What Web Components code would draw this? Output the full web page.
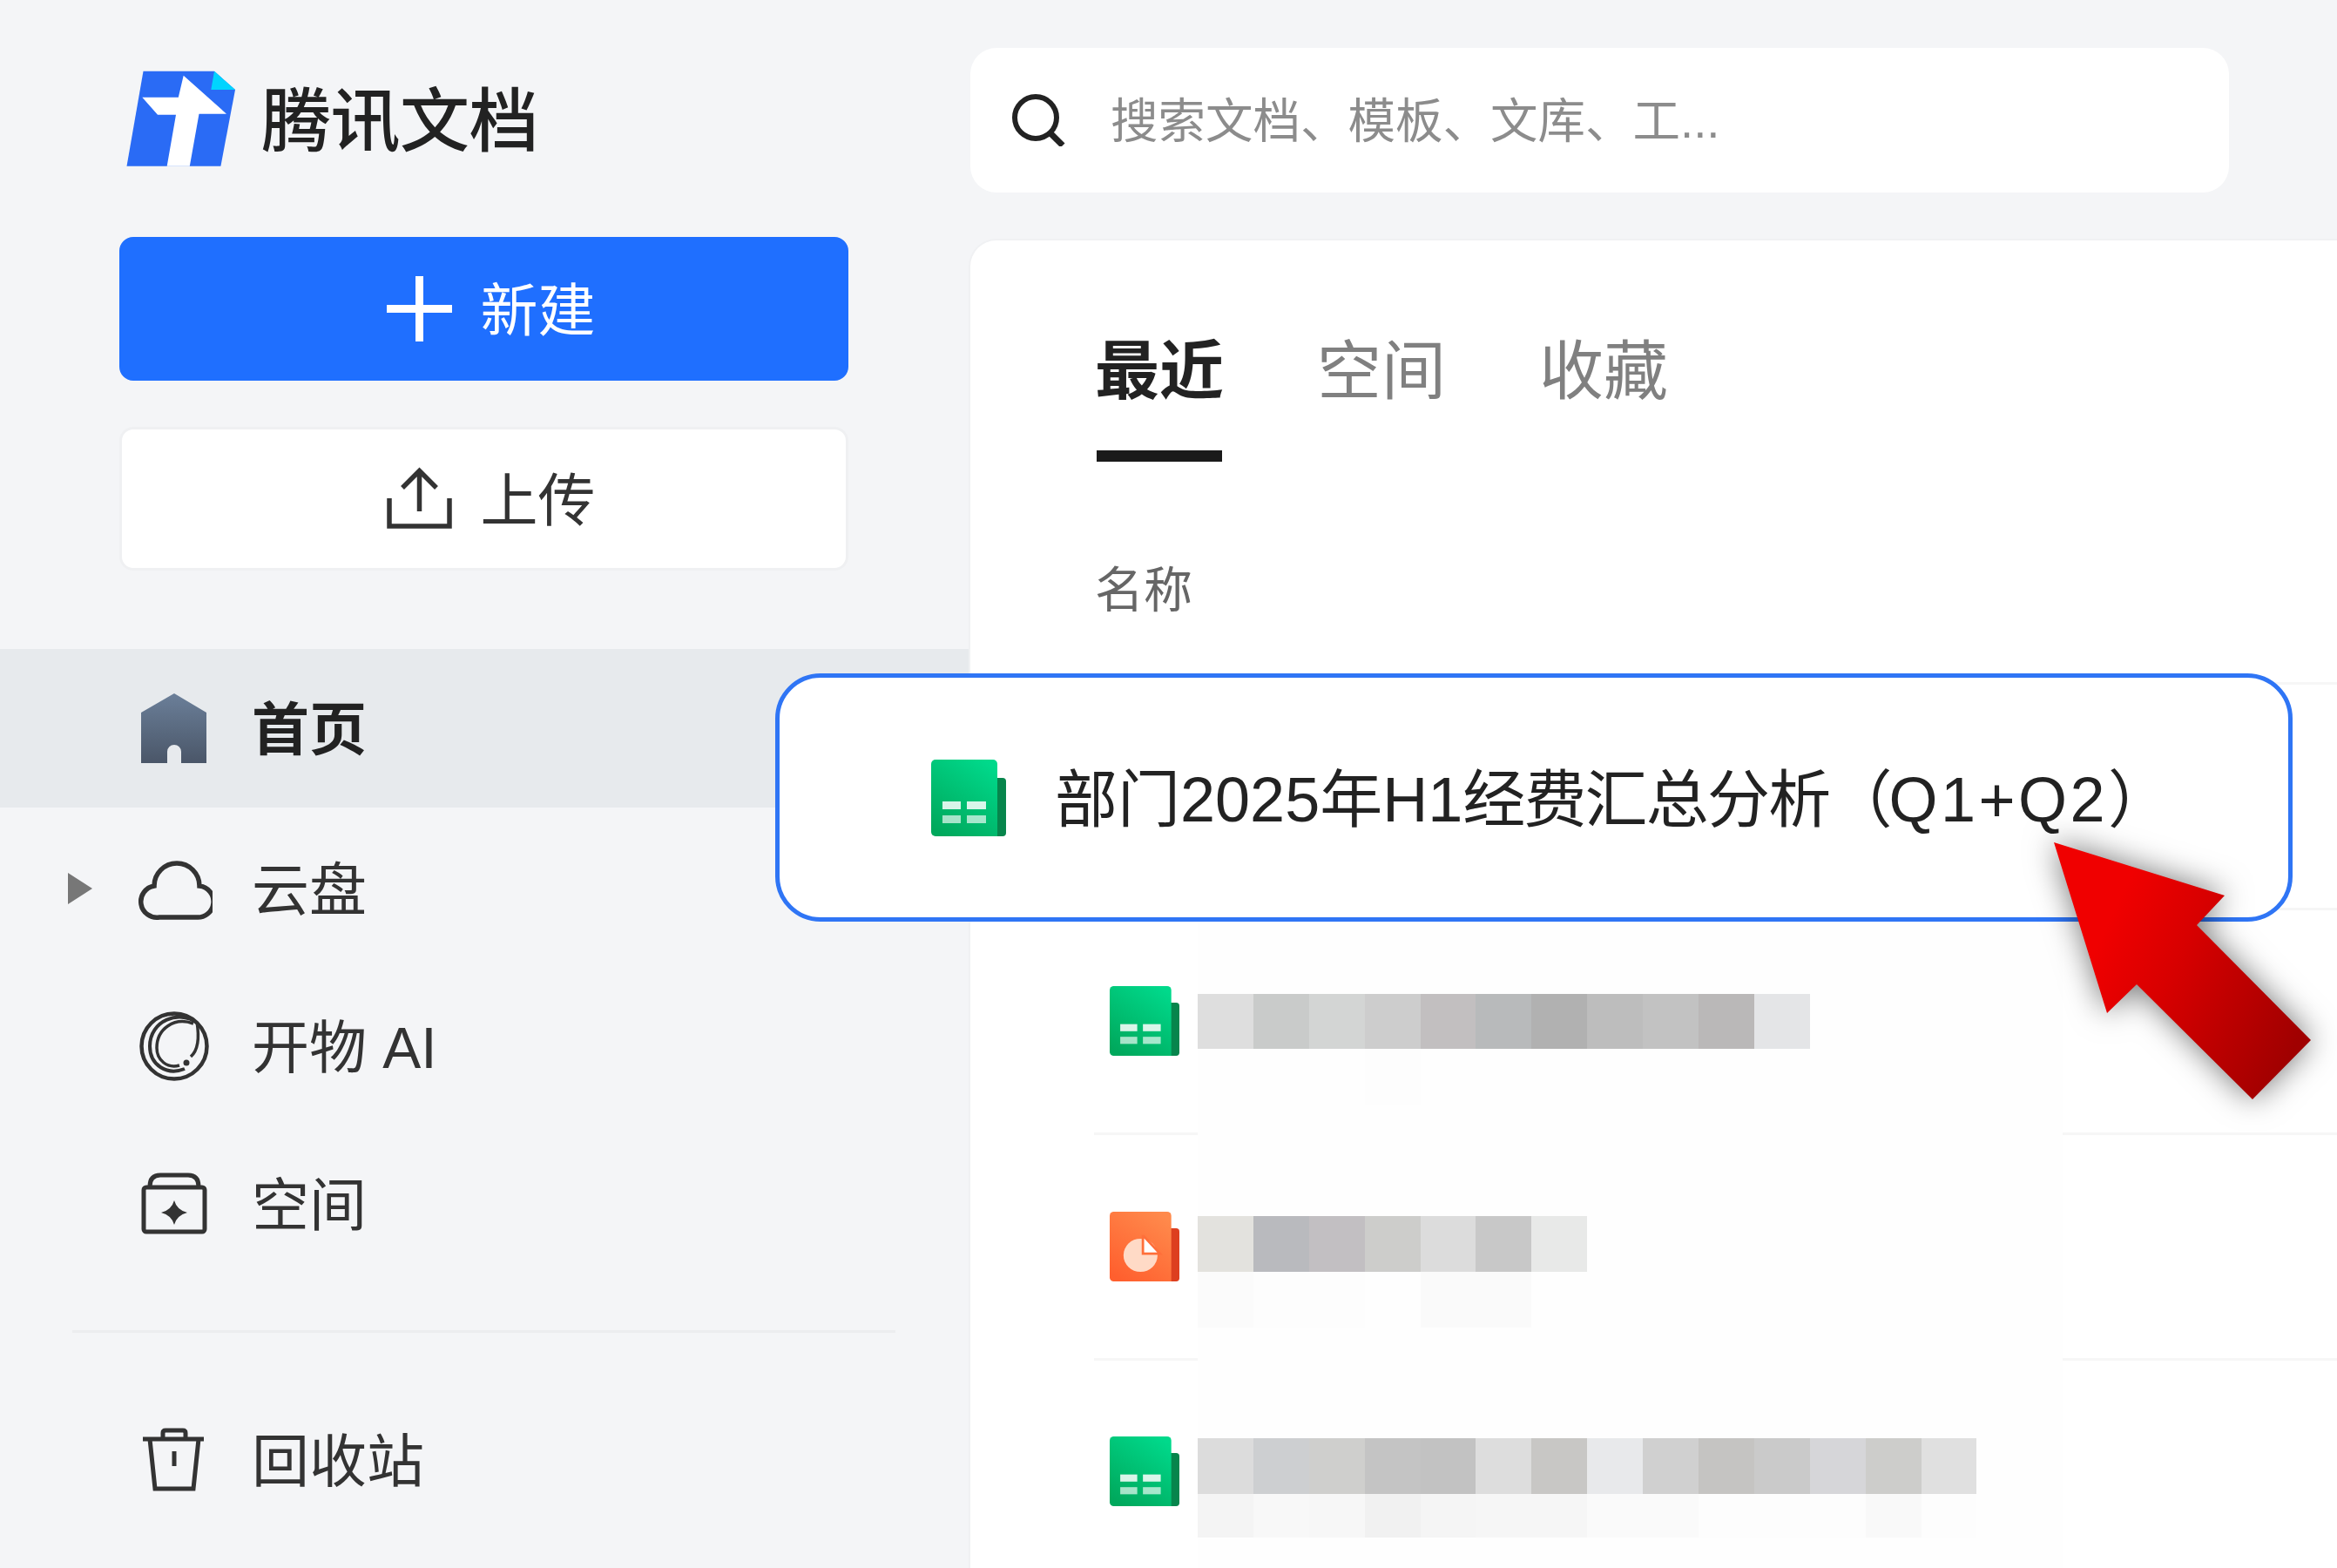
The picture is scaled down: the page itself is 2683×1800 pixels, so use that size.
<!DOCTYPE html>
<html lang="zh">
<head>
<meta charset="utf-8">
<title>腾讯文档</title>
<style>
    html, body { margin: 0; height: 100%; overflow: hidden; background: #f4f5f7; }
    body { font-family: "Liberation Sans", "Noto Sans CJK SC", sans-serif; color: #333; }
    svg[slot="icon"] { display: block; width: 100%; height: 100%; }
</style>
</head>
<body>

<app-shell>
    <side-bar slot="side">
        <brand-logo>腾讯文档</brand-logo>
        <action-button kind="primary">
            <svg slot="icon" viewBox="445 318 75 75"><path d="M482.500 318v75M445 355.500h75" fill="none" stroke="#fff" stroke-width="9"/></svg>
            新建
        </action-button>
        <action-button>
            <svg slot="icon" viewBox="445 533 75 75"><path d="M448 570v32h69v-32M482.500 585v-47M463 558l19.500-19.500L502 558" fill="none" stroke="#333" stroke-width="5.500"/></svg>
            上传
        </action-button>

        <nav-item active>
            <svg slot="icon" viewBox="158 795 86 80"><defs><linearGradient id="homeFill" x1="0" y1="0" x2="0" y2="1"><stop offset="0" stop-color="#6b7f99"/><stop offset="1" stop-color="#4a5668"/></linearGradient></defs><path d="M200 795l37 22v58h-29v-13a8 8 0 0 0-16 0v13h-30v-58z" fill="url(#homeFill)"/></svg>
            首页
        </nav-item>
        <nav-item caret>
            <svg slot="icon" viewBox="158 978 86 80"><path d="M183 1051H225A18 18 0 0 0 229 1015A26 26 0 1 0 177 1015A18 18 0 0 0 183 1051Z" fill="none" stroke="#333" stroke-width="5.500"/></svg>
            云盘
        </nav-item>
        <nav-item>
            <svg slot="icon" viewBox="158 1160 86 80"><g fill="none" stroke="#333"><circle cx="200" cy="1200" r="37.500" stroke-width="4.500"/><path d="M226 1173c-20-15-54-3-54 27 0 22 20 34 40 26" stroke-width="4"/><path d="M222 1174c-22-8-42 6-42 28 0 14 12 24 26 20" stroke-width="3.500"/><path d="M226 1172c3 18 1 33-7 40" stroke-width="3.500"/></g><circle cx="214" cy="1219" r="3.500" fill="#333"/></svg>
            开物 AI
        </nav-item>
        <nav-item>
            <svg slot="icon" viewBox="158 1342 86 80"><g fill="none" stroke="#333" stroke-width="5"><rect x="165" y="1363" width="70" height="51" rx="3"/><path d="M172 1362q0-13 12-13h32q12 0 12 13"/></g><path d="M200 1378q3 11 15 14-12 3-15 14-3-11-15-14 12-3 15-14z" fill="#333"/></svg>
            空间
        </nav-item>
        <nav-rule></nav-rule>
        <nav-item>
            <svg slot="icon" viewBox="158 1638 86 80"><path d="M164 1654h70M187 1654v-7q0-3 3-3h20q3 0 3 3v7M172 1654l6 57h44l6-57M200 1668v17" fill="none" stroke="#333" stroke-width="5"/></svg>
            回收站
        </nav-item>
    </side-bar>

    <search-bar slot="search">搜索文档、模板、文库、工...</search-bar>

    <main-card slot="card">
        <tab-bar>
            <tab-item active>最近</tab-item>
            <tab-item>空间</tab-item>
            <tab-item>收藏</tab-item>
        </tab-bar>
        <list-head>名称</list-head>
        <file-list>
            <file-row></file-row>
            <file-row><doc-icon kind="sheet"></doc-icon></file-row>
            <file-row><doc-icon kind="slide"></doc-icon></file-row>
            <file-row><doc-icon kind="sheet"></doc-icon></file-row>
        </file-list>
    </main-card>

    <blur-patch slot="over"></blur-patch>
    <focus-row slot="over">部门2025年H1<span style="letter-spacing:-1.800px">经费汇总分析</span><span style="letter-spacing:-4px">（</span><span style="letter-spacing:3.500px">Q1+Q2</span>）</focus-row>
    <pointer-arrow slot="over"></pointer-arrow>
</app-shell>

<script>
class AppShell extends HTMLElement {
    constructor() {
        super();
        this.attachShadow({ mode: 'open' }).innerHTML = `
            <style>
                :host { display: grid; grid-template-columns: 1114px 1fr; position: relative; width: 2683px; height: 1800px; overflow: hidden; }
                .main { display: flex; flex-direction: column; padding-top: 55px; gap: 55px; min-width: 0; }
            </style>
            <slot name="side"></slot>
            <div class="main">
                <slot name="search"></slot>
                <slot name="card"></slot>
            </div>
            <slot name="over"></slot>
        `;
    }
}
customElements.define('app-shell', AppShell);

class SideBar extends HTMLElement {
    constructor() {
        super();
        this.attachShadow({ mode: 'open' }).innerHTML = `
            <style>
                :host { display: flex; flex-direction: column; filter: blur(.7px); }
            </style>
            <slot></slot>
        `;
    }
}
customElements.define('side-bar', SideBar);

class BrandLogo extends HTMLElement {
    constructor() {
        super();
        this.attachShadow({ mode: 'open' }).innerHTML = `
            <style>
                :host { display: flex; align-items: center; gap: 29px; height: 110px; margin: 81px 0 81px 145px; color: #222; font-size: 80px; font-weight: 500; line-height: 1; letter-spacing: -.5px; }
                svg { width: 126px; height: 110px; flex: none; }
                span { margin-top: 8px; }
            </style>
            <svg viewBox="145 81 126 110">
                <path d="M164.500 81.700H246L270 103 253.400 190.700H145.500z" fill="#2a6bf5"/>
                <path d="M246 81.700L270 103H242.300z" fill="#00d4ff"/>
                <path d="M210.700 86.700L260 130.700H228.500L217.800 190.700H191.700L202 131.700H181L163.300 111.700H204.800z" fill="#fff"/>
            </svg>
            <span><slot></slot></span>
        `;
    }
}
customElements.define('brand-logo', BrandLogo);

class ActionButton extends HTMLElement {
    constructor() {
        super();
        this.attachShadow({ mode: 'open' }).innerHTML = `
            <style>
                :host { display: flex; align-items: center; justify-content: center; gap: 33px; box-sizing: border-box; width: 837px; height: 165px; margin: 0 0 53px 137px; padding-left: 16px; border-radius: 16px; background: #fff; border: 3px solid #eff0f2; font-size: 66px; line-height: 1; color: #333; }
                :host([kind="primary"]) { background: #1f6fff; border-color: #1f6fff; color: #fff; }
                .icon { width: 75px; height: 75px; flex: none; }
                span { margin-top: 5px; }
            </style>
            <div class="icon"><slot name="icon"></slot></div>
            <span><slot></slot></span>
        `;
    }
}
customElements.define('action-button', ActionButton);

class NavItem extends HTMLElement {
    constructor() {
        super();
        this.attachShadow({ mode: 'open' }).innerHTML = `
            <style>
                :host { display: flex; align-items: center; box-sizing: border-box; height: 181px; padding-left: 78px; font-size: 66px; line-height: 1; color: #333; }
                :host([active]) { background: #e7eaed; font-weight: 700; color: #222; height: 182px; margin: 37px 0 2px; }
                .caret { width: 0; height: 0; flex: none; margin-right: 52px; border-left: 28px solid transparent; border-top: 18px solid transparent; border-bottom: 18px solid transparent; }
                :host([caret]) .caret { border-left-color: #777; }
                .icon { width: 86px; height: 80px; flex: none; margin-right: 45px; }
                span.label { margin-top: 4px; }
            </style>
            <span class="caret"></span>
            <div class="icon"><slot name="icon"></slot></div>
            <span class="label"><slot></slot></span>
        `;
    }
}
customElements.define('nav-item', NavItem);

class NavRule extends HTMLElement {
    constructor() {
        super();
        this.attachShadow({ mode: 'open' }).innerHTML = `
            <style>
                :host { display: block; height: 3px; margin: 55px 86px 55px 83px; background: #ecedef; }
            </style>
        `;
    }
}
customElements.define('nav-rule', NavRule);

class SearchBar extends HTMLElement {
    constructor() {
        super();
        this.attachShadow({ mode: 'open' }).innerHTML = `
            <style>
                :host { display: flex; align-items: center; gap: 52px; box-sizing: border-box; width: 1445px; height: 166px; padding-left: 48px; border-radius: 30px; background: #fff; color: #8c8c8c; font-size: 54.500px; line-height: 1; filter: blur(.7px); }
                svg { width: 61px; height: 61px; flex: none; margin-bottom: 2px; }
                span { margin-top: 5px; }
            </style>
            <svg viewBox="1160 107 61 61"><circle cx="1187" cy="135" r="24" fill="none" stroke="#222" stroke-width="6"/><path d="M1204 153l14 14" stroke="#222" stroke-width="7"/></svg>
            <span><slot></slot></span>
        `;
    }
}
customElements.define('search-bar', SearchBar);

class MainCard extends HTMLElement {
    constructor() {
        super();
        this.attachShadow({ mode: 'open' }).innerHTML = `
            <style>
                :host { display: block; height: 1600px; background: #fff; border-top-left-radius: 30px; box-shadow: 0 0 0 2px #f0f1f3; filter: blur(.7px); }
            </style>
            <slot></slot>
        `;
    }
}
customElements.define('main-card', MainCard);

class TabBar extends HTMLElement {
    constructor() {
        super();
        this.attachShadow({ mode: 'open' }).innerHTML = `
            <style>
                :host { display: flex; gap: 111px; padding: 115px 0 0 145px; }
            </style>
            <slot></slot>
        `;
    }
}
customElements.define('tab-bar', TabBar);

class TabItem extends HTMLElement {
    constructor() {
        super();
        this.attachShadow({ mode: 'open' }).innerHTML = `
            <style>
                :host { display: block; padding-bottom: 54px; border-bottom: 13px solid transparent; color: #808080; font-size: 74px; line-height: 72px; }
                :host([active]) { color: #222; font-weight: 700; border-bottom-color: #1a1a1a; }
                span { display: block; margin: 0 -2px; }
            </style>
            <span><slot></slot></span>
        `;
    }
}
customElements.define('tab-item', TabItem);

class ListHead extends HTMLElement {
    constructor() {
        super();
        this.attachShadow({ mode: 'open' }).innerHTML = `
            <style>
                :host { display: block; margin: 120px 0 78px 143px; color: #666; font-size: 56px; line-height: 55px; }
            </style>
            <slot></slot>
        `;
    }
}
customElements.define('list-head', ListHead);

class FileList extends HTMLElement {
    constructor() {
        super();
        this.attachShadow({ mode: 'open' }).innerHTML = `
            <style>
                :host { display: block; margin-left: 142px; border-top: 3px solid #f6f6f6; }
            </style>
            <slot></slot>
        `;
    }
}
customElements.define('file-list', FileList);

class FileRow extends HTMLElement {
    constructor() {
        super();
        this.attachShadow({ mode: 'open' }).innerHTML = `
            <style>
                :host { display: flex; align-items: center; box-sizing: border-box; height: 258.500px; padding-left: 18px; border-bottom: 3px solid #f6f6f6; }
            </style>
            <slot></slot>
        `;
    }
}
customElements.define('file-row', FileRow);

class DocIcon extends HTMLElement {
    connectedCallback() {
        const slide = this.getAttribute('kind') === 'slide';
        const top = slide ? '#ff8a4c' : '#00d98b';
        const bottom = slide ? '#ff5f2e' : '#00a85c';
        const tab = slide ? '#dd3f1f' : '#07854c';
        const mark = slide
            ? `<circle cx="38" cy="55" r="21" fill="#ffdac6"/><path d="M41 31l1 0 20 22H41z" fill="#fff" stroke="#ff6f3a" stroke-width="3"/>`
            : `<g fill="#fff"><rect x="13" y="48" width="21" height="9" opacity=".85"/><rect x="41" y="48" width="22" height="9" opacity=".85"/><rect x="13" y="64" width="21" height="9" opacity=".65"/><rect x="41" y="64" width="22" height="9" opacity=".65"/></g>`;
        this.attachShadow({ mode: 'open' }).innerHTML = `
            <style>
                :host { display: block; width: 80px; height: 80px; flex: none; }
                svg { display: block; width: 100%; height: 100%; }
            </style>
            <svg viewBox="0 0 86 88" preserveAspectRatio="none">
                <defs><linearGradient id="face" x1="0.800" y1="0" x2="0.200" y2="1"><stop offset="0" stop-color="${top}"/><stop offset="1" stop-color="${bottom}"/></linearGradient></defs>
                <rect x="60" y="21" width="26" height="67" rx="4" fill="${tab}"/>
                <path d="M5 0h66a5 5 0 0 1 5 5v83H5a5 5 0 0 1-5-5V5a5 5 0 0 1 5-5z" fill="url(#face)"/>
                ${mark}
            </svg>
        `;
    }
}
customElements.define('doc-icon', DocIcon);

// mosaic that hides the other file names, one line per row of tiles
const PATCH_ROWS = [
    [63, ['#fefefe']],
    [64, ['#fefefe']],
    [63, ['#dedede', '#c9cbca', '#d3d5d4', '#cdcdcd', '#c2bfc0', '#b8babb', '#b1b1b1', '#bdbdbd', '#c2c2c2', '#bab8b8', '#e4e5e7']],
    [64, ['#fefefe', '#fefefe', '#fefefe', '#fdfdfd', '#fefefe', '#fefefe', '#fefefe', '#fefefe', '#fefefe', '#fefefe']],
    [64, ['#fefefe']],
    [64, ['#fefefe']],
    [64, ['#e3e2de', '#b9babe', '#c2bfc2', '#cdcdcb', '#dcdcdc', '#c8c8c8', '#e8e9e8']],
    [64, ['#fbfbfb', '#fdfdfd', '#fdfdfd', '#fefefe', '#fafafa', '#fafafa']],
    [64, ['#fefefe']],
    [63, ['#fefefe']],
    [64, ['#dcdcdc', '#cdcfd1', '#cfcfcd', '#c4c4c4', '#c2c2c2', '#dddddd', '#c8c7c5', '#e8e9eb', '#d0d0d0', '#c5c4c2', '#cacaca', '#d6d6d9', '#cdcdcb', '#e0e0e0']],
    [50, ['#f4f4f4', '#f8f8f8', '#f7f7f7', '#f1f1f1', '#f5f5f5', '#f6f6f6', '#f6f6f6', '#fafafa', '#fafafa', '#fdfdfd', '#fdfdfd', '#fdfdfd', '#f9f9f9', '#fdfdfd']],
    [50, ['#fefefe']]
];

class BlurPatch extends HTMLElement {
    connectedCallback() {
        const rows = PATCH_ROWS.map(([h, tiles]) => {
            const cells = tiles.map(c => `<i style="background:${c}"></i>`).join('');
            return `<div class="row" style="height:${h}px">${cells}</div>`;
        }).join('');
        this.attachShadow({ mode: 'open' }).innerHTML = `
            <style>
                :host { display: block; position: absolute; left: 1375px; top: 1014px; width: 993px; height: 786px; overflow: hidden; background: #fefefe; filter: blur(.7px); }
                .row { display: flex; }
                i { display: block; width: 63.900px; flex: none; }
            </style>
            ${rows}
        `;
    }
}
customElements.define('blur-patch', BlurPatch);

class FocusRow extends HTMLElement {
    constructor() {
        super();
        this.attachShadow({ mode: 'open' }).innerHTML = `
            <style>
                :host { display: flex; align-items: center; gap: 56px; position: absolute; left: 890px; top: 773px; box-sizing: border-box; width: 1742px; height: 285px; padding-left: 174px; border: 5px solid #2f75f5; border-radius: 52px; background: #fff; color: #222; font-size: 72px; line-height: 1; white-space: nowrap; }
                doc-icon { width: 86px; height: 88px; }
                span { margin-top: 4px; }
            </style>
            <doc-icon kind="sheet"></doc-icon>
            <span><slot></slot></span>
        `;
    }
}
customElements.define('focus-row', FocusRow);

class PointerArrow extends HTMLElement {
    constructor() {
        super();
        this.attachShadow({ mode: 'open' }).innerHTML = `
            <style>
                :host { display: block; position: absolute; left: 2358px; top: 967px; width: 295px; height: 295px; filter: drop-shadow(0 0 18px rgba(0, 0, 0, .55)); }
                svg { display: block; width: 100%; height: 100%; overflow: visible; }
            </style>
            <svg viewBox="2358 967 295 295">
                <defs><linearGradient id="arrowFill" gradientUnits="userSpaceOnUse" x1="2410" y1="1080" x2="2640" y2="1190"><stop offset="0" stop-color="#f00000"/><stop offset=".35" stop-color="#d80000"/><stop offset="1" stop-color="#a00000"/></linearGradient></defs>
                <path d="M2358 967L2554 1028 2522 1062 2653 1194 2586 1262 2453 1130 2419 1163z" fill="url(#arrowFill)"/>
            </svg>
        `;
    }
}
customElements.define('pointer-arrow', PointerArrow);
</script>
</body>
</html>
